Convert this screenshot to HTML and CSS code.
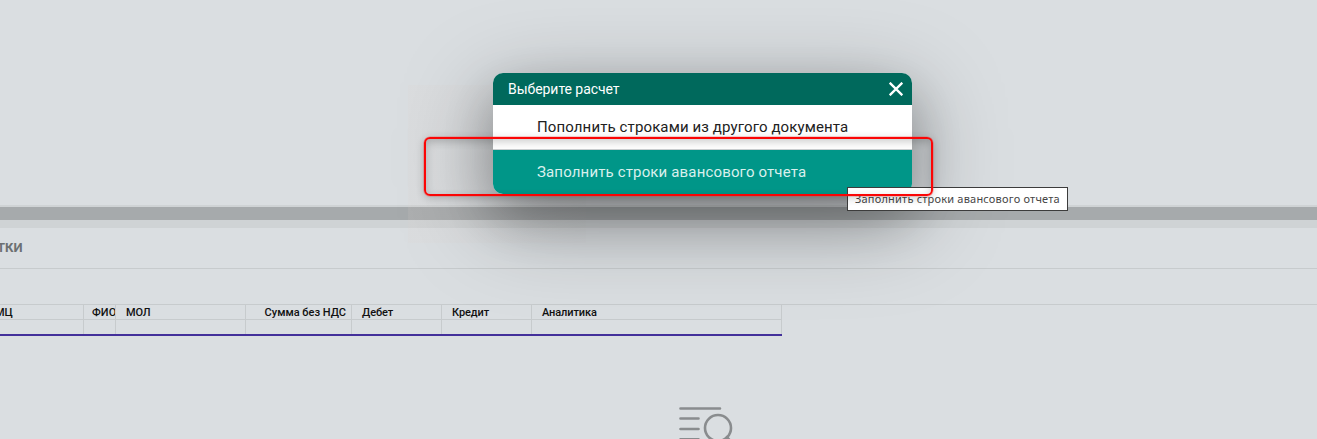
FILE: index.html
```html
<!DOCTYPE html>
<html lang="ru">
<head>
<meta charset="utf-8">
<title>Выберите расчет</title>
<link rel="stylesheet" href="styles.css">
</head>
<body>
<main class="page">
  <div class="upper-pane"></div>
  <div class="splitter"><div class="splitter-bar"></div></div>
  <div class="tabs"><span class="tab">ТКИ</span></div>
  <div class="toolbar"></div>
  <div class="grid-area">
    <div class="grid">
      <div class="cell cell-first"><span>МЦ</span></div>
      <div class="cell cell-clip"><span>ФИО</span></div>
      <div class="cell"><span>МОЛ</span></div>
      <div class="cell cell-num"><span>Сумма без НДС</span></div>
      <div class="cell"><span>Дебет</span></div>
      <div class="cell"><span>Кредит</span></div>
      <div class="cell"><span>Аналитика</span></div>
      <div class="filter"></div><div class="filter"></div><div class="filter"></div><div class="filter"></div><div class="filter"></div><div class="filter"></div><div class="filter"></div>
    </div>
  </div>
  <div class="empty">
    <svg class="empty-icon" width="56" height="48" viewBox="0 0 56 48" fill="none" stroke="#898c8e" stroke-width="2.6" stroke-linecap="round">
      <path d="M2.5 3.5H42M2.5 13.5H20.5M2.5 24H20.5M2.5 34.2H20.5"/>
      <circle cx="40" cy="23" r="13"/>
      <path d="M49 32L54 38"/>
    </svg>
  </div>
</main>

<div class="haze"></div>
<section class="dialog">
  <header class="dialog-head">
    <span class="dialog-title">Выберите расчет</span>
    <svg class="close" width="14" height="14" viewBox="0 0 14 14" stroke="#fff" stroke-width="2.3"><path d="M.7.7L13.3 13.3M13.3.7L.7 13.3"/></svg>
  </header>
  <div class="option option-plain"><span>Пополнить строками из другого документа</span></div>
  <div class="option option-active"><span>Заполнить строки авансового отчета</span></div>
</section>
<div class="tooltip"><span>Заполнить строки авансового отчета</span></div>
<div class="marker"></div>
</body>
</html>
```
FILE: styles.css
```css
* { box-sizing: border-box; }
body {
  margin: 0;
  width: 1317px;
  height: 439px;
  overflow: hidden;
  position: relative;
  background: #dadee1;
  font-family: Roboto, "Liberation Sans", sans-serif;
}
.page { height: 439px; display: flex; flex-direction: column; overflow: hidden; }
.upper-pane { height: 205px; flex: none; }
.splitter { height: 23px; flex: none; padding: 2px 0 8px; background: #cfd3d5; }
.splitter-bar { height: 13px; background: #a6aaac; }
.tabs { height: 41px; flex: none; display: flex; align-items: center; border-bottom: 1px solid #c7cbcd; }
.tab { font-size: 13px; line-height: 16px; font-weight: 700; color: #6c7072; margin-left: -3px; }
.toolbar { height: 35px; flex: none; }
.grid-area { flex: none; border-top: 1px solid #c7cbcd; }
.grid {
  width: 782px;
  display: grid;
  grid-template-columns: 84px 32px 130px 106px 90px 90px 250px;
  grid-template-rows: 15px 14px;
  border-bottom: 2px solid #43309a;
}
.cell, .filter { border-right: 1px solid #c7cbcd; border-bottom: 1px solid #c7cbcd; }
.filter { border-bottom: 0; height: 14px; }
.cell { height: 15px; padding: 1px 0 0 10px; font-size: 11px; line-height: 14px; color: #111; white-space: nowrap; overflow: hidden; font-weight: 500; letter-spacing: -.1px; }
.cell-first { padding-left: 0; }
.cell-first span { margin-left: -5px; }
.cell-clip { padding-left: 8px; letter-spacing: .1px; }
.cell-num { padding-left: 0; padding-right: 5px; text-align: right; letter-spacing: 0; }
.empty { flex: none; padding: 69px 0 0 678px; height: 120px; }
.empty-icon { display: block; }

.haze {
  position: absolute;
  left: 408px;
  top: 85px;
  width: 178px;
  height: 158px;
  background: linear-gradient(90deg, rgba(222, 208, 202, .12), rgba(190, 182, 178, .04));
}
.dialog {
  position: absolute;
  left: 493px;
  top: 73px;
  width: 419px;
  height: 121px;
  border-radius: 10px;
  overflow: hidden;
  background: #fff;
  box-shadow: 0 24px 90px 2px rgba(0, 0, 0, .34), 0 22px 50px rgba(0, 0, 0, .2);
}
.dialog-head { height: 32px; display: flex; align-items: center; justify-content: space-between; padding: 0 9px 0 15px; background: #00695c; color: #fff; }
.dialog-title { font-size: 14px; line-height: 20px; letter-spacing: -.05px; }
.close { display: block; }
.option { height: 44px; padding-left: 44px; font-size: 15px; line-height: 44px; letter-spacing: .12px; white-space: nowrap; color: #212121; }
.option-active { height: 45px; border-top: 1px solid #c9cdcf; background: #009688; color: #d9f0ed; letter-spacing: .15px; }

.tooltip {
  position: absolute;
  left: 847px;
  top: 187px;
  width: 221px;
  height: 24px;
  padding-left: 7px;
  border: 1px solid #3c3c3c;
  background: #fff;
  color: #454545;
  font: 11px/21px "Noto Sans", sans-serif;
  letter-spacing: .2px;
  white-space: nowrap;
}
.marker {
  position: absolute;
  left: 424px;
  top: 137px;
  width: 509px;
  height: 59px;
  border: 2px solid #fb0505;
  border-radius: 6px;
  box-shadow: 0 0 0 .6px rgba(250, 60, 60, .45), 0 2px 9px rgba(0, 0, 0, .2), inset 0 3px 9px rgba(0, 0, 0, .2);
}
```
